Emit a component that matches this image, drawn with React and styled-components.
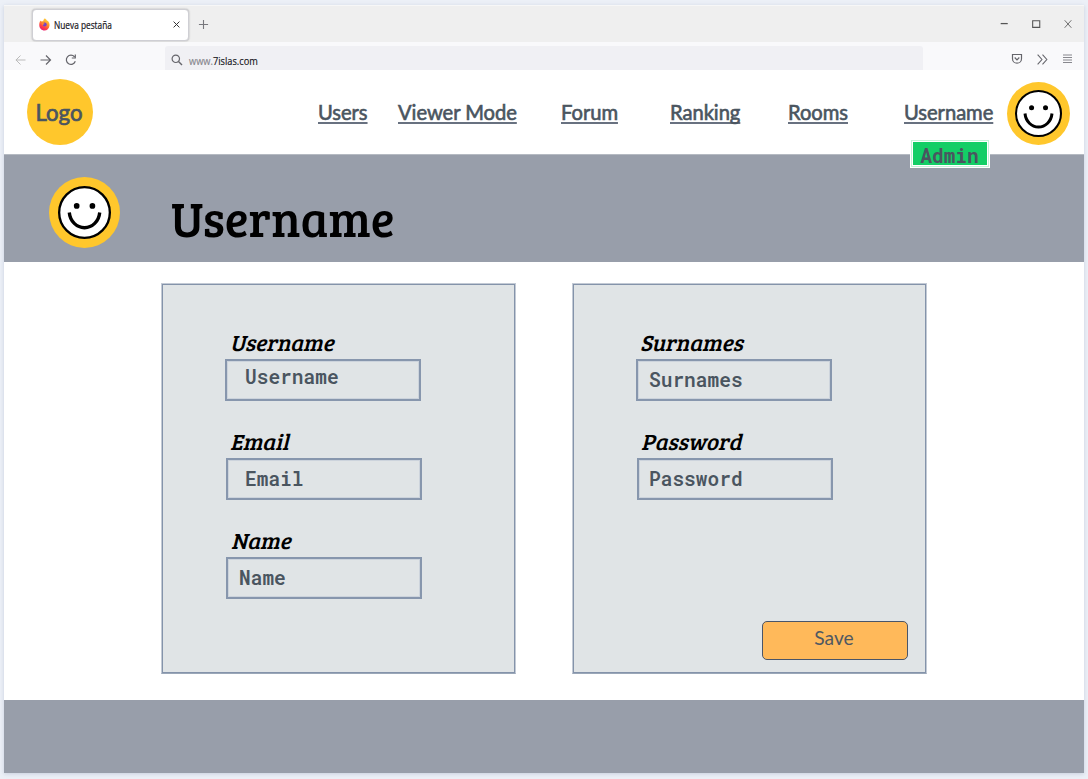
import React from "react";
import styled, { createGlobalStyle } from "styled-components";

const Global = createGlobalStyle`
  * { box-sizing: border-box; }
  html, body { margin: 0; background: #ecf0f7; }
  body { width: 1088px; height: 779px; overflow: hidden; font-family: Lato, "Liberation Sans", sans-serif; }
`;

const Desktop = styled.div`
  width: 1088px;
  height: 779px;
  padding: 5px 4px 6px;
  background: #ecf0f7;
`;
const Window = styled.div`
  display: flex;
  flex-direction: column;
  height: 768px;
  background: #fff;
  box-shadow: 0 1px 4px rgba(120, 135, 165, 0.3);
`;
const TabBar = styled.div`
  height: 37px;
  display: flex;
  align-items: flex-start;
  padding: 3px 10px 0 28px;
  background: #efefef;
  border-top: 1px solid #f7f7f7;
`;
const Tab = styled.div`
  width: 157px;
  height: 32px;
  display: flex;
  align-items: center;
  padding: 0 8px 2px 6px;
  background: #fff;
  border: 1px solid #cfcfd4;
  border-radius: 4px;
  box-shadow: 0 0 2px rgba(0, 0, 0, 0.3);
`;
const TabTitle = styled.span`
  flex: 1;
  margin-left: 4px;
  padding-top: 1px;
  font: 10px "Open Sans", sans-serif;
  transform: scaleX(0.83);
  transform-origin: left;
  color: #15141a;
  -webkit-text-stroke: 0.2px #15141a;
`;
const NewTab = styled.div`
  display: flex;
  margin: 10px 0 0 9px;
`;
const WindowControls = styled.div`
  display: flex;
  gap: 22px;
  margin: 10px 1px 0 auto;
`;
const Toolbar = styled.div`
  height: 28px;
  display: flex;
  align-items: flex-end;
  background: #f9f9fb;
`;
const NavButtons = styled.div`
  display: flex;
  align-items: center;
  gap: 13px;
  width: 161px;
  height: 20px;
  padding-left: 11px;
`;
const AddressBar = styled.div`
  width: 758px;
  height: 24px;
  display: flex;
  align-items: center;
  gap: 6px;
  padding: 3px 0 0 6px;
  margin-right: 88px;
  background: #f0f0f4;
  border-radius: 3px 3px 0 0;
`;
const Address = styled.span`
  padding-top: 2px;
  font: 10.5px "Open Sans", sans-serif;
  transform: scaleX(0.88);
  transform-origin: left;
  color: #85858c;
  -webkit-text-stroke: 0.15px;
  b { font-weight: 400; color: #15141a; }
`;
const ToolButtons = styled.div`
  display: flex;
  align-items: center;
  gap: 13px;
  height: 22px;
`;
const Header = styled.header`
  height: 84px;
  display: flex;
  align-items: flex-start;
  padding-left: 23px;
`;
const Logo = styled.div`
  width: 66px;
  height: 66px;
  margin-top: 9px;
  padding-right: 2px;
  border-radius: 50%;
  background: #ffc72c;
  color: #4a5560;
  font-size: 22.2px;
  -webkit-text-stroke: 0.7px #4a5560;
  line-height: 67px;
  text-align: center;
`;
const Nav = styled.nav`
  display: flex;
  margin: 29px 0 0 225px;
`;
const NavLink = styled.a`
  width: ${(p) => p.$w}px;
  margin-right: ${(p) => p.$gap}px;
  white-space: nowrap;
  font-size: 20.2px;
  line-height: 27px;
  letter-spacing: -0.05px;
  color: #4a5560;
  -webkit-text-stroke: 0.6px #4a5560;
  text-decoration: underline;
  text-decoration-color: #687180;
  text-decoration-thickness: 1.5px;
  text-underline-offset: 2px;
  text-decoration-skip-ink: none;
`;
const UserLink = styled.div`
  position: relative;
  width: 89px;
`;
const AdminBadge = styled.div`
  position: absolute;
  top: 40px;
  left: 6px;
  width: 80px;
  height: 29px;
  border: 3px solid #fff;
  outline: 1px solid #c5f2d9;
  outline-offset: -2px;
  background: #13ce66;
  color: #4a5560;
  font: 700 19.5px/27px "Roboto Mono", "DejaVu Sans Mono", monospace;
  padding-right: 1px;
  text-align: center;
`;
const HeaderAvatar = styled.div`
  display: flex;
  margin: 12px 0 0 14px;
`;
const Banner = styled.section`
  height: 108px;
  display: flex;
  align-items: flex-start;
  padding: 22px 0 0 45px;
  background: #989eaa;
  border-top: 1px solid #b5bac2;
`;
const Title = styled.h1`
  margin: 13px 0 0 51px;
  font: 49px/56px "Bree Serif", "DejaVu Serif Condensed", "DejaVu Serif", serif;
  color: #000;
`;
const Main = styled.main`
  height: 438px;
  display: flex;
  gap: 56px;
  padding: 21px 0 0 157px;
`;
const Panel = styled.section`
  width: 355px;
  height: 391px;
  display: flex;
  flex-direction: column;
  padding: 47px 0 0 63px;
  background: #e0e4e6;
  border: 1px solid #c3cad5;
  border-bottom-color: #9aa7b8;
  box-shadow: inset 0 0 0 1px #8493aa;
`;
const Field = styled.div`
  height: 99px;
  margin-left: ${(p) => p.$shift || 0}px;
`;
const Label = styled.label`
  display: block;
  height: 28px;
  padding-left: ${(p) => p.$pad || 5}px;
  font: italic 22.7px/23px "Bree Serif", "DejaVu Serif Condensed", "DejaVu Serif", serif;
  color: #000;
`;
const Input = styled.div`
  width: 196px;
  height: 42px;
  padding-left: ${(p) => p.$pad}px;
  border: 2px solid #8796ad;
  box-shadow: inset 0 0 0 1px #ccd3dc;
  color: #4a5560;
  font: 600 19.5px/${(p) => p.$line || 38}px "Roboto Mono", "DejaVu Sans Mono", monospace;
`;
const SaveButton = styled.button`
  width: 146px;
  height: 39px;
  margin: auto 18px 13px auto;
  padding: 0 2px 6px 0;
  border: 1.5px solid #4a5568;
  border-radius: 5px;
  background: #ffb95a;
  color: #4f5862;
  font: 19.2px Lato, sans-serif;
`;
const Footer = styled.footer`
  height: 73px;
  background: #989eaa;
`;

const Icon = ({ w = 12, h = w, box = "0 0 12 12", color = "#65656b", sw = 1, children }) => (
  <svg width={w} height={h} viewBox={box} fill="none" stroke={color} strokeWidth={sw}>{children}</svg>
);

const Firefox = () => (
  <svg width="11" height="13" viewBox="0 0 11 13">
    <defs>
      <linearGradient id="fox" x1="0.8" y1="0" x2="0.3" y2="1">
        <stop offset="0" stopColor="#ffe14a" />
        <stop offset="0.4" stopColor="#ff9a27" />
        <stop offset="0.75" stopColor="#ff3c47" />
        <stop offset="1" stopColor="#e51b79" />
      </linearGradient>
    </defs>
    <path d="M5.8.3C7 1.2 7.7 2.1 8.2 3.1l.4-.6c1.5 1.6 2.2 3.4 1.9 5.3-.4 2.9-2.5 4.7-5 4.7C2.6 12.5.4 10.3.3 7.5.2 5.7.6 4 1.5 2.6l.6 1.2.9-1.1 1 1.1C4.2 2.4 4.8 1.2 5.8.3Z" fill="url(#fox)" />
    <circle cx="5.7" cy="6.6" r="2" fill="#7542c9" />
    <path d="M2.6 5.2c1.4-.6 2.3-.1 3.2.8-1.3 0-1.5.8-2.6.9Z" fill="#ff8b27" />
  </svg>
);

const Smiley = ({ size }) => (
  <svg width={size} height={size} viewBox="0 0 70 70">
    <circle cx="35" cy="35" r="35" fill="#ffc72c" />
    <circle cx="35" cy="35" r="25" fill="#fff" stroke="#000" strokeWidth="2.3" />
    <circle cx="27.3" cy="28.5" r="2.8" />
    <circle cx="42.8" cy="28.5" r="2.8" />
    <path d="M20 35c.8 8.7 7.3 15 15 15s14.2-6.3 15-15" fill="none" stroke="#000" strokeWidth="3.3" />
  </svg>
);

const links = [
  ["Users", 50, 30],
  ["Viewer Mode", 118, 45],
  ["Forum", 57, 52],
  ["Ranking", 72, 46],
  ["Rooms", 60, 56],
];

export default function App() {
  return (
    <Desktop>
      <Global />
      <Window>
        <TabBar>
          <Tab>
            <Firefox />
            <TabTitle>Nueva pestaña</TabTitle>
            <Icon w={7} color="#333"><path d="M1 1l10 10M11 1L1 11" strokeWidth="1.7" /></Icon>
          </Tab>
          <NewTab><Icon w={11} color="#77777c"><path d="M6 1v10M1 6h10" strokeWidth="1.2" /></Icon></NewTab>
          <WindowControls>
            <Icon w={10} color="#555" sw={1.5}><path d="M2 5.5h8.5" /></Icon>
            <Icon w={10} color="#555" sw={1.3}><path d="M2 2h8.5v8H2z" /></Icon>
            <Icon w={10} color="#555"><path d="M2 1.5l8 9M10 1.5l-8 9" /></Icon>
          </WindowControls>
        </TabBar>
        <Toolbar>
          <NavButtons>
            <Icon color="#bbb"><path d="M10.5 6H.8M5.5 1.5L1 6 5.5 10.5" /></Icon>
            <Icon><path d="M.5 6h10M6 1.5L10.5 6 6 10.5" strokeWidth="1.2" /></Icon>
            <Icon><path d="M9.5 2.8A4.6 4.6 0 1 0 10.3 7.3M10.3.5V4H6.8" strokeWidth="1.2" /></Icon>
          </NavButtons>
          <AddressBar>
            <Icon w={12}><circle cx="4.8" cy="4.8" r="3.7" strokeWidth="1.2" /><path d="M7.5 7.5l3.5 3.5" strokeWidth="1.4" /></Icon>
            <Address>www.<b>7islas.com</b></Address>
          </AddressBar>
          <ToolButtons>
            <Icon><path d="M1.5 1.5h9v4.2a4.5 4.5 0 0 1-9 0zM3.7 4.5L6 6.8l2.3-2.3" strokeWidth="1.2" /></Icon>
            <Icon w={13}><path d="M1.5 1.5L5.5 6l-4 4.5M6 1.5L10 6l-4 4.5" /></Icon>
            <Icon color="#88888e"><path d="M1 2h9M1 4.5h9M1 7h9M1 9.5h9" strokeWidth="1.2" /></Icon>
          </ToolButtons>
        </Toolbar>
        <Header>
          <Logo>Logo</Logo>
          <Nav>
            {links.map(([text, w, gap]) => (
              <NavLink key={text} $w={w} $gap={gap}>{text}</NavLink>
            ))}
            <UserLink>
              <NavLink>Username</NavLink>
              <AdminBadge>Admin</AdminBadge>
            </UserLink>
          </Nav>
          <HeaderAvatar><Smiley size={63} /></HeaderAvatar>
        </Header>
        <Banner>
          <Smiley size={71} />
          <Title>Username</Title>
        </Banner>
        <Main>
          <Panel>
            <Field>
              <Label>Username</Label>
              <Input $pad={18} $line={32}>Username</Input>
            </Field>
            <Field $shift={1}>
              <Label $pad={4}>Email</Label>
              <Input $pad={17}>Email</Input>
            </Field>
            <Field $shift={1}>
              <Label>Name</Label>
              <Input $pad={11}>Name</Input>
            </Field>
          </Panel>
          <Panel>
            <Field>
              <Label $pad={4}>Surnames</Label>
              <Input $pad={11}>Surnames</Input>
            </Field>
            <Field $shift={1}>
              <Label $pad={4}>Password</Label>
              <Input $pad={10}>Password</Input>
            </Field>
            <SaveButton>Save</SaveButton>
          </Panel>
        </Main>
        <Footer />
      </Window>
    </Desktop>
  );
}
